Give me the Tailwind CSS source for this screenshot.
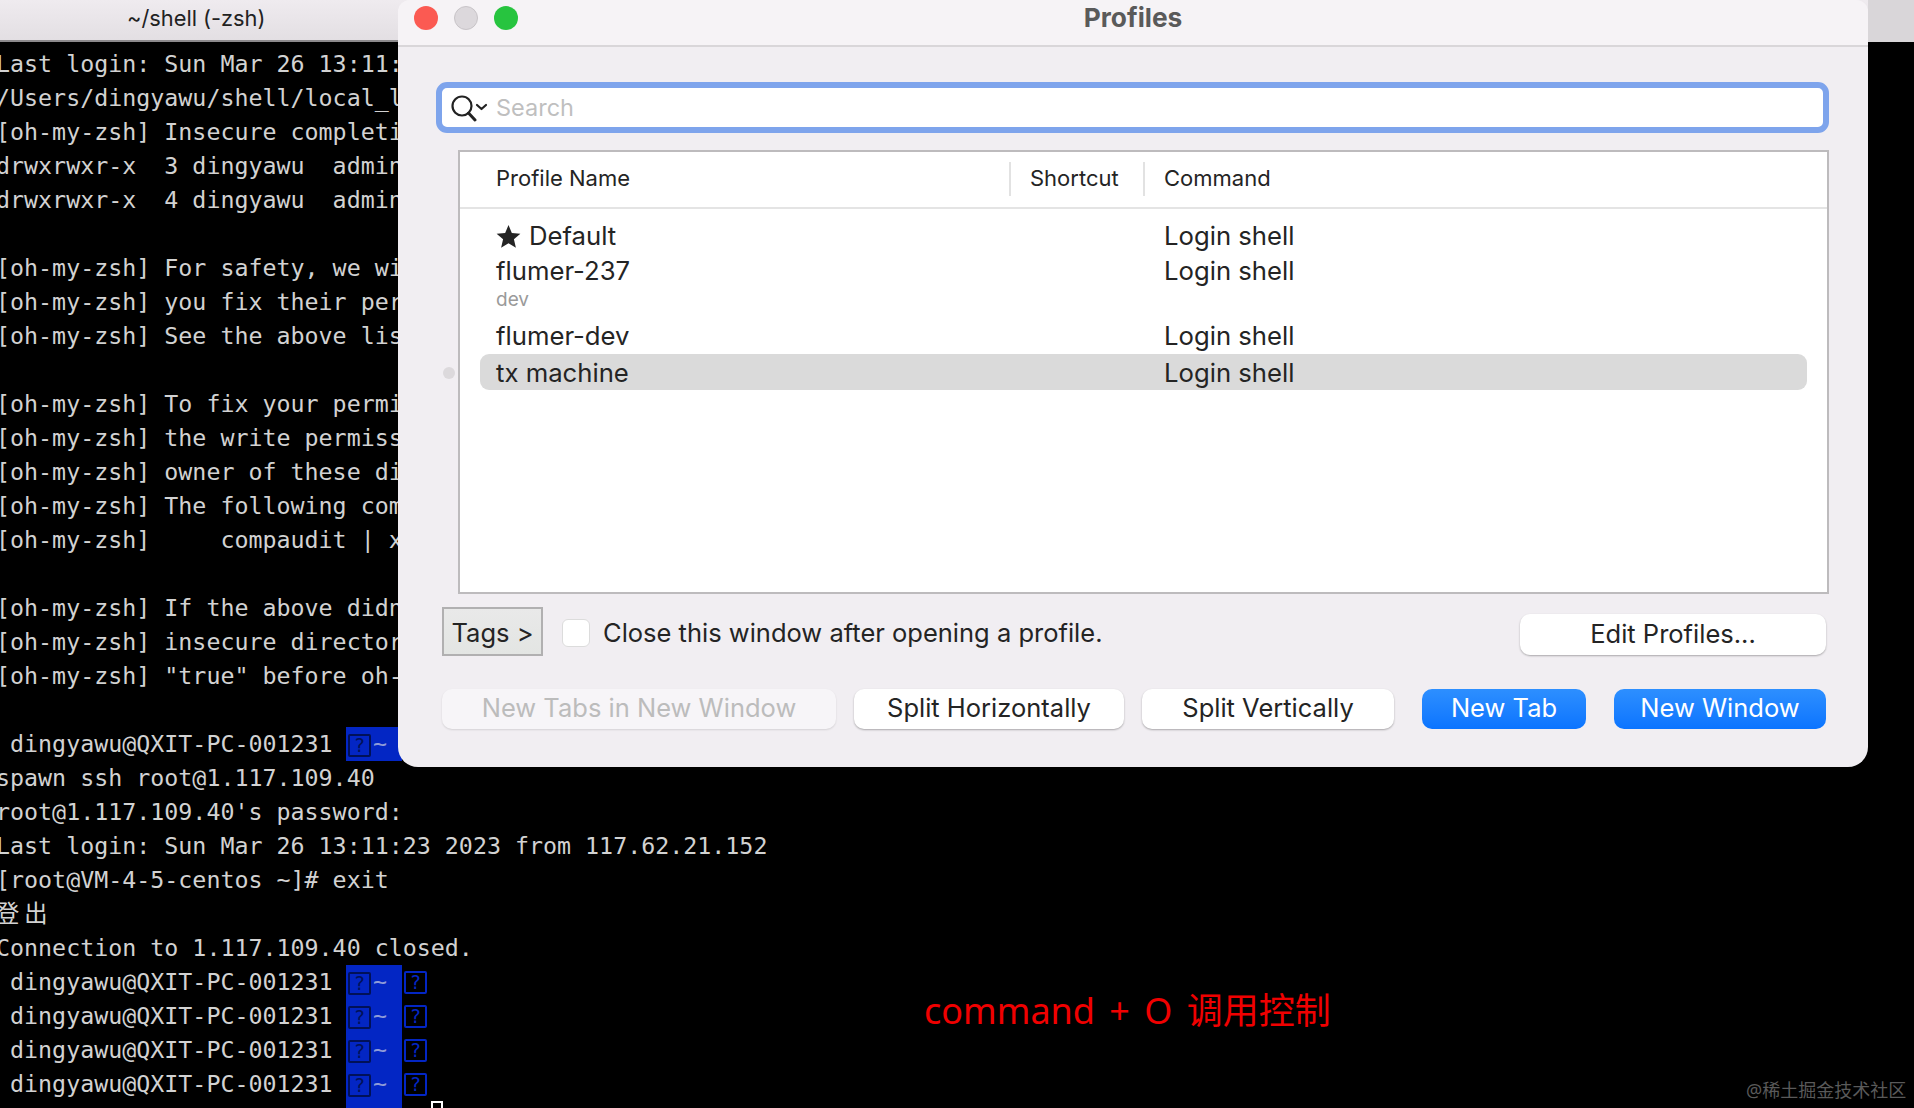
<!DOCTYPE html>
<html lang="en">
<head>
  <meta charset="UTF-8" />
  <title>Profiles</title>
  <script src="https://cdn.jsdelivr.net/npm/@tailwindcss/browser@4"></script>
</head>
<body class="bg-black">
  <div class="relative w-[1914px] h-[1108px] overflow-hidden bg-black">

    <!-- terminal behind the dialog -->
    <div class="h-[42px] flex items-center bg-gradient-to-b from-[#efebef] to-[#e3dfe3] border-b-2 border-[#8c8a8c] font-['Inter',sans-serif] text-[#222]">
      <span class="ml-[127px] text-[21.8px] mt-[-3px]">~/shell (-zsh)</span>
    </div>
    <div class="pt-[4.5px] -ml-[4px] font-['DejaVu_Sans_Mono','Noto_Sans_CJK_SC',monospace] text-[23.3px] leading-[34px] text-[#d2d2d2] *:whitespace-pre">
      <div class="h-[34px]">Last login: Sun Mar 26 13:11:23 2023 on ttys001</div>
      <div class="h-[34px]">/Users/dingyawu/shell/local_login.sh</div>
      <div class="h-[34px]">[oh-my-zsh] Insecure completion-dependent directories detected:</div>
      <div class="h-[34px]">drwxrwxr-x  3 dingyawu  admin  96 /usr/local/share/zsh</div>
      <div class="h-[34px]">drwxrwxr-x  4 dingyawu  admin  128 /usr/local/share</div>
      <div class="h-[34px]"></div>
      <div class="h-[34px]">[oh-my-zsh] For safety, we will not load completions from these directories</div>
      <div class="h-[34px]">[oh-my-zsh] you fix their permissions and ownership and restart zsh.</div>
      <div class="h-[34px]">[oh-my-zsh] See the above list for directories with group or other</div>
      <div class="h-[34px]"></div>
      <div class="h-[34px]">[oh-my-zsh] To fix your permissions you can do so by disabling</div>
      <div class="h-[34px]">[oh-my-zsh] the write permission of "group" and "others" and making sure</div>
      <div class="h-[34px]">[oh-my-zsh] owner of these directories is either root or your current user.</div>
      <div class="h-[34px]">[oh-my-zsh] The following command may help:</div>
      <div class="h-[34px]">[oh-my-zsh]     compaudit | xargs chmod g-w,o-w</div>
      <div class="h-[34px]"></div>
      <div class="h-[34px]">[oh-my-zsh] If the above didn't help or you want to skip the verification</div>
      <div class="h-[34px]">[oh-my-zsh] insecure directories, set the variable ZSH_DISABLE_COMPFIX to</div>
      <div class="h-[34px]">[oh-my-zsh] "true" before oh-my-zsh is sourced in your zshrc file.</div>
      <div class="h-[34px]"></div>
      <div class="h-[34px] flex"><span class="w-[350px]"> dingyawu@QXIT-PC-001231</span><span class="w-[56px] bg-[#0326c4] flex items-center pl-[2px]"><span class="mt-[3px] w-[23px] h-[23px] border-2 border-[#011158] rounded-[2px] flex items-center justify-center text-[#011158] text-[19px]">?</span><span class="ml-[2px] text-[#8f9bd8]">~</span></span></div>
      <div class="h-[34px]">spawn ssh root@1.117.109.40</div>
      <div class="h-[34px]">root@1.117.109.40's password:</div>
      <div class="h-[34px]">Last login: Sun Mar 26 13:11:23 2023 from 117.62.21.152</div>
      <div class="h-[34px]">[root@VM-4-5-centos ~]# exit</div>
      <div class="h-[34px] tracking-[5px]">登出</div>
      <div class="h-[34px]">Connection to 1.117.109.40 closed.</div>
      <div class="h-[34px] flex"><span class="w-[350px]"> dingyawu@QXIT-PC-001231</span><span class="w-[56px] bg-[#0326c4] flex items-center pl-[2px]"><span class="mt-[3px] w-[23px] h-[23px] border-2 border-[#011158] rounded-[2px] flex items-center justify-center text-[#011158] text-[19px]">?</span><span class="ml-[2px] text-[#8f9bd8]">~</span></span><span class="ml-[2px] mt-[6px] w-[23px] h-[23px] border-2 border-[#0326c4] rounded-[2px] flex items-center justify-center text-[#0326c4] text-[19px]">?</span></div>
      <div class="h-[34px] flex"><span class="w-[350px]"> dingyawu@QXIT-PC-001231</span><span class="w-[56px] bg-[#0326c4] flex items-center pl-[2px]"><span class="mt-[3px] w-[23px] h-[23px] border-2 border-[#011158] rounded-[2px] flex items-center justify-center text-[#011158] text-[19px]">?</span><span class="ml-[2px] text-[#8f9bd8]">~</span></span><span class="ml-[2px] mt-[6px] w-[23px] h-[23px] border-2 border-[#0326c4] rounded-[2px] flex items-center justify-center text-[#0326c4] text-[19px]">?</span></div>
      <div class="h-[34px] flex"><span class="w-[350px]"> dingyawu@QXIT-PC-001231</span><span class="w-[56px] bg-[#0326c4] flex items-center pl-[2px]"><span class="mt-[3px] w-[23px] h-[23px] border-2 border-[#011158] rounded-[2px] flex items-center justify-center text-[#011158] text-[19px]">?</span><span class="ml-[2px] text-[#8f9bd8]">~</span></span><span class="ml-[2px] mt-[6px] w-[23px] h-[23px] border-2 border-[#0326c4] rounded-[2px] flex items-center justify-center text-[#0326c4] text-[19px]">?</span></div>
      <div class="h-[34px] flex"><span class="w-[350px]"> dingyawu@QXIT-PC-001231</span><span class="w-[56px] bg-[#0326c4] flex items-center pl-[2px]"><span class="mt-[3px] w-[23px] h-[23px] border-2 border-[#011158] rounded-[2px] flex items-center justify-center text-[#011158] text-[19px]">?</span><span class="ml-[2px] text-[#8f9bd8]">~</span></span><span class="ml-[2px] mt-[6px] w-[23px] h-[23px] border-2 border-[#0326c4] rounded-[2px] flex items-center justify-center text-[#0326c4] text-[19px]">?</span></div>
      <div class="h-[34px] flex"><span class="w-[350px]"> dingyawu@QXIT-PC-001231</span><span class="w-[56px] bg-[#0326c4]"></span><span class="ml-[29px] w-[12px] h-[20px] border-2 border-white"></span></div>
    </div>

    <!-- Profiles dialog -->
    <div class="absolute left-[398px] top-0 w-[1470px] h-[767px] bg-[#f1eef2] rounded-b-[20px] rounded-tl-[12px] rounded-tr-[12px] font-['Inter',sans-serif] text-[#242424]">
      <div class="relative h-[47px] bg-[#f6f3f6] border-b-2 border-[#d9d6d9] rounded-t-[12px] flex items-center justify-center">
        <div class="absolute left-[16px] top-[6px] flex gap-[16px]">
          <span class="w-[24px] h-[24px] rounded-full bg-[#fb5a52]"></span>
          <span class="w-[24px] h-[24px] rounded-full bg-[#dcd8dc] border border-[#c8c4c8]"></span>
          <span class="w-[24px] h-[24px] rounded-full bg-[#27c43f]"></span>
        </div>
        <span class="text-[26.3px] font-bold text-[#5a5a5a] mt-[-10px]">Profiles</span>
      </div>

      <div class="mt-[35px] ml-[38px] w-[1393px] h-[51px] bg-white border-[6px] border-[#7ea4ec] rounded-[11px] flex items-center">
        <svg class="ml-[8px] w-[38px] h-[28px]" viewBox="0 0 38 28" fill="none" stroke="#222" stroke-linecap="round" stroke-linejoin="round">
          <circle cx="12" cy="12" r="9.5" stroke-width="2.2" />
          <path d="M18.5 19 L25 26" stroke-width="3" />
          <path d="M27 11 L31.5 15 L36 11" stroke-width="2.2" />
        </svg>
        <span class="ml-[8px] text-[23.5px] text-[#bfbfbf]">Search</span>
      </div>

      <div class="relative mt-[17px] ml-[60px] w-[1371px] h-[444px] bg-white border-2 border-[#bdbbbd]">
        <span class="absolute -left-[17px] top-[215px] w-[12px] h-[12px] rounded-full bg-[#dcd9dc]"></span>
        <div class="h-[57px] pb-[2px] border-b-2 border-[#e4e4e4] mx-0 px-[20px] grid grid-cols-[529px_134px_1fr] items-center text-[22px]">
          <span class="pl-[16px]">Profile Name</span>
          <span class="pl-[19px] h-[34px] flex items-center border-l-2 border-[#e2e2e2]">Shortcut</span>
          <span class="pl-[19px] h-[34px] flex items-center border-l-2 border-[#e2e2e2]">Command</span>
        </div>
        <div class="pt-[8px] px-[20px] text-[25.7px]">
          <div class="h-[36px] pb-[2px] grid grid-cols-[529px_134px_1fr] items-center">
            <span class="pl-[16px] flex items-center gap-[8px]">
              <svg class="w-[25px] h-[25px]" viewBox="0 0 24 24" fill="#242424"><path d="M12 1 L15.2 8.6 L23.4 9.3 L17.2 14.7 L19.1 22.8 L12 18.5 L4.9 22.8 L6.8 14.7 L0.6 9.3 L8.8 8.6 Z" /></svg>
              Default
            </span>
            <span></span>
            <span class="pl-[21px]">Login shell</span>
          </div>
          <div class="h-[64px] grid grid-cols-[529px_134px_1fr] items-start">
            <span class="pl-[16px] flex flex-col">
              <span class="h-[36px] leading-[36px]">flumer-237</span>
              <span class="text-[19px] leading-[20px] text-[#9a9a9a] mt-[1px]">dev</span>
            </span>
            <span></span>
            <span class="pl-[21px] h-[36px] leading-[36px]">Login shell</span>
          </div>
          <div class="h-[37px] pb-[2px] grid grid-cols-[529px_134px_1fr] items-center">
            <span class="pl-[16px]">flumer-dev</span>
            <span></span>
            <span class="pl-[21px]">Login shell</span>
          </div>
          <div class="h-[36px] pb-[2px] grid grid-cols-[529px_134px_1fr] items-center bg-[#dadada] rounded-[9px]">
            <span class="pl-[16px]">tx machine</span>
            <span></span>
            <span class="pl-[21px]">Login shell</span>
          </div>
        </div>
      </div>

      <div class="mt-[13px] ml-[44px] w-[1384px] h-[49px] flex items-center text-[25.5px]">
        <div class="w-[101px] h-[49px] pt-[3px] border-2 border-[#b1b0b1] bg-gradient-to-b from-[#e9e9e9] to-[#e3e5e3] flex items-center justify-center">Tags &gt;</div>
        <span class="ml-[19px] mt-[3px] w-[28px] h-[28px] bg-white border border-[#dcdcdc] rounded-[6px]"></span>
        <span class="ml-[13px] mt-[3px]">Close this window after opening a profile.</span>
        <div class="ml-auto mt-[6px] w-[306px] h-[41px] bg-white rounded-[10px] shadow-[0_1px_2px_rgba(0,0,0,0.3)] flex items-center justify-center">Edit Profiles...</div>
      </div>

      <div class="mt-[33px] ml-[44px] h-[40px] flex text-[25.5px]">
        <div class="w-[394px] pb-[2px] bg-[#f7f5f8] text-[#bcbcbc] rounded-[10px] shadow-[0_1px_2px_rgba(0,0,0,0.12)] flex items-center justify-center">New Tabs in New Window</div>
        <div class="ml-[18px] w-[270px] pb-[2px] bg-white rounded-[10px] shadow-[0_1px_2px_rgba(0,0,0,0.3)] flex items-center justify-center">Split Horizontally</div>
        <div class="ml-[18px] w-[252px] pb-[2px] bg-white rounded-[10px] shadow-[0_1px_2px_rgba(0,0,0,0.3)] flex items-center justify-center">Split Vertically</div>
        <div class="ml-[28px] w-[164px] pb-[2px] bg-gradient-to-b from-[#2d8fff] to-[#0a74ff] text-white rounded-[10px] flex items-center justify-center">New Tab</div>
        <div class="ml-[28px] w-[212px] pb-[2px] bg-gradient-to-b from-[#2d8fff] to-[#0a74ff] text-white rounded-[10px] flex items-center justify-center">New Window</div>
      </div>
    </div>

    <!-- grey strip right of the dialog -->
    <div class="absolute left-[1868px] top-0 w-[46px] h-[42px] bg-[#d9d6d9]"></div>

    <!-- annotations on top of the screenshot -->
    <div class="absolute left-[924px] top-[985px] font-['Noto_Sans','Noto_Sans_CJK_SC',sans-serif] text-[36px] leading-[52px] text-[#f00000] whitespace-nowrap [word-spacing:5px]">command + O 调用控制</div>
    <div class="absolute left-[1746px] top-[1078px] font-['Noto_Sans','Noto_Sans_CJK_SC',sans-serif] text-[18px] leading-[24px] text-[#5a5a5a] whitespace-nowrap">@稀土掘金技术社区</div>
  </div>
</body>
</html>
